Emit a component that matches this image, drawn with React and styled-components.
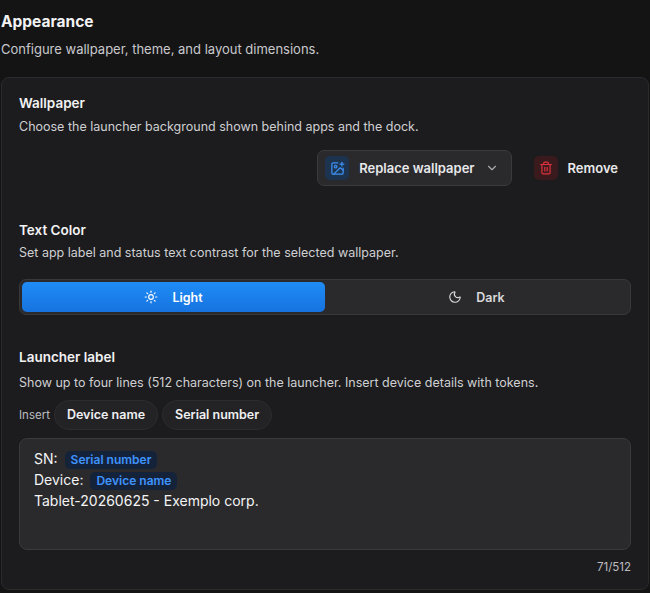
import React from "react";
import styled, { createGlobalStyle } from "styled-components";
import { ImagePlus, ChevronDown, Trash2, Sun, Moon } from "lucide-react";

const G = createGlobalStyle`
  body{margin:0;background:#141415;font-family:Inter,"Noto Sans",sans-serif;color:#f2f2f3;}
`;
const Page = styled.div`padding:12px 1px 0 1px;width:648px;`;
const H1 = styled.div`font-size:15.5px;font-weight:700;line-height:20px;`;
const Sub = styled.div`font-size:13px;color:#c9c9cc;margin-top:8px;line-height:18px;`;
const Card = styled.div`margin-top:19px;background:#1c1c1e;border:1px solid #2b2b2e;border-radius:8px;padding:16px 17px 14px 17px;height:513px;box-sizing:border-box;`;
const Title = styled.div`font-size:13.5px;font-weight:600;line-height:18px;margin-top:${p=>p.$mt||0}px;`;
const Desc = styled.div`font-size:12.5px;color:#cfcfd2;margin-top:${p=>p.$mt||7}px;line-height:16px;`;
const Actions = styled.div`display:flex;justify-content:flex-end;align-items:center;gap:14px;margin-top:15px;`;
const Btn = styled.button`display:flex;align-items:center;gap:10px;height:36px;padding:0 12px 0 7px;border-radius:7px;
  border:1px solid ${p=>p.$ghost?"transparent":"#3a3a3e"};background:${p=>p.$ghost?"transparent":"#2a2a2d"};
  color:#e8e8ea;font:600 13px Inter,sans-serif;`;
const IconBox = styled.span`width:24px;height:24px;border-radius:5px;display:flex;align-items:center;justify-content:center;background:${p=>p.$bg};color:${p=>p.$c};`;
const Seg = styled.div`display:flex;margin-top:18px;background:#2a2a2d;border:1px solid #38383b;border-radius:7px;padding:2px;height:36px;box-sizing:border-box;`;
const SegItem = styled.div`flex:1;display:flex;align-items:center;justify-content:center;gap:14px;border-radius:5px;font-size:12.5px;font-weight:600;
  background:${p=>p.$on?"linear-gradient(#1f8cf5,#1673e0)":"transparent"};color:${p=>p.$on?"#fff":"#d8d8db"};`;
const InsertRow = styled.div`display:flex;align-items:center;gap:4px;margin-top:9px;font-size:11.5px;color:#bcbcc0;`;
const Chip = styled.span`padding:6px 12px;border-radius:15px;background:#232326;border:1px solid #2d2d30;color:#f0f0f2;font-size:12.5px;font-weight:600;line-height:16px;`;
const Editor = styled.div`margin-top:8px;background:#2a2a2c;border:1px solid #3a3a3d;border-radius:8px;height:112px;box-sizing:border-box;padding:9px 14px;font-size:14px;line-height:21px;color:#f4f4f5;`;
const Token = styled.span`display:inline-block;background:#15233a;color:#3f93ff;font-size:12px;font-weight:600;border-radius:5px;padding:0 6px;line-height:18px;margin-left:7px;`;
const Count = styled.div`text-align:right;font-size:11.5px;color:#bdbdc0;margin-top:10px;`;

export default function App(){
  return <Page><G/>
    <H1>Appearance</H1>
    <Sub>Configure wallpaper, theme, and layout dimensions.</Sub>
    <Card>
      <Title>Wallpaper</Title>
      <Desc>Choose the launcher background shown behind apps and the dock.</Desc>
      <Actions>
        <Btn><IconBox $bg="#1d3450" $c="#3d8ff0"><ImagePlus size={15}/></IconBox>Replace wallpaper<ChevronDown size={14} color="#aaa"/></Btn>
        <Btn $ghost><IconBox $bg="#3a1a1d" $c="#e0323f"><Trash2 size={14}/></IconBox>Remove</Btn>
      </Actions>
      <Title $mt={35}>Text Color</Title>
      <Desc $mt={6}>Set app label and status text contrast for the selected wallpaper.</Desc>
      <Seg>
        <SegItem $on><Sun size={14}/>Light</SegItem>
        <SegItem><Moon size={14}/>Dark</SegItem>
      </Seg>
      <Title $mt={33}>Launcher label</Title>
      <Desc $mt={9}>Show up to four lines (512 characters) on the launcher. Insert device details with tokens.</Desc>
      <InsertRow>Insert<Chip>Device name</Chip><Chip>Serial number</Chip></InsertRow>
      <Editor>
        <div>SN:<Token>Serial number</Token></div>
        <div>Device:<Token>Device name</Token></div>
        <div>Tablet-20260625 - Exemplo corp.</div>
      </Editor>
      <Count>71/512</Count>
    </Card>
  </Page>;
}
